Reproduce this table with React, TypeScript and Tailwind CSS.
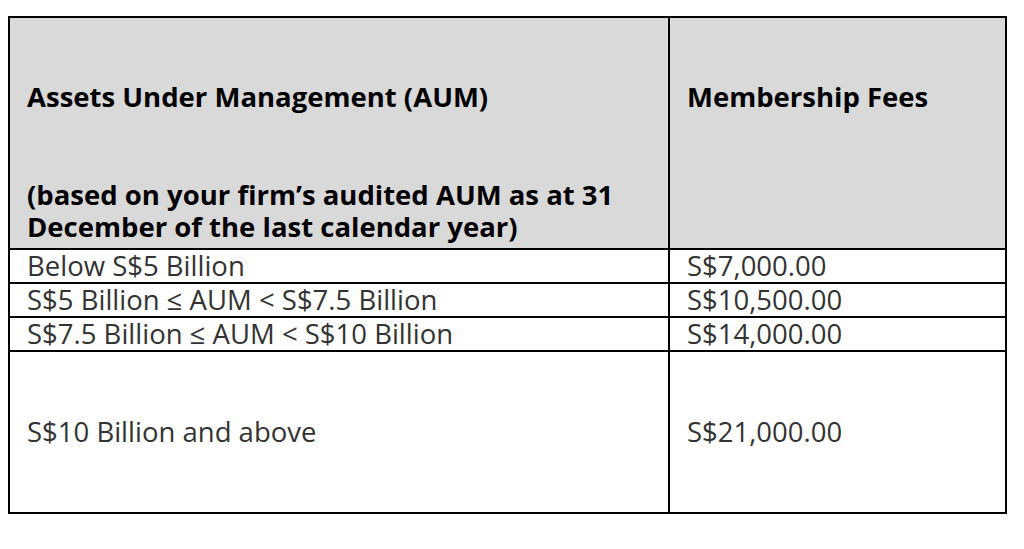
const rows = [
  { aum: 'Below S$5 Billion', fee: 'S$7,000.00' },
  { aum: 'S$5 Billion ≤ AUM < S$7.5 Billion', fee: 'S$10,500.00' },
  { aum: 'S$7.5 Billion ≤ AUM < S$10 Billion', fee: 'S$14,000.00' },
]

export default function App() {
  return (
    <div className="min-h-[549px] bg-white pl-[8px] pt-[16px]" style={{ fontFamily: '"Open Sans", "Noto Sans", sans-serif' }}>
      <table className="w-[999px] border-collapse border-2 border-black text-[27.5px] leading-[32px] text-[#333]">
        <colgroup>
          <col className="w-[660px]" />
          <col />
        </colgroup>
        <thead>
          <tr className="bg-[#d9d9d9] text-black font-bold align-top">
            <th className="h-[232px] border-2 border-black pl-[17px] pr-[17px] pt-[63px] text-left font-bold leading-[32.5px]">
              <p>Assets Under Management (AUM)</p>
              <p className="mt-[65px]">
                (based on your firm’s audited AUM as at 31
                <br />
                December of the last calendar year)
              </p>
            </th>
            <th className="border-2 border-black pl-[17px] pt-[63px] text-left font-bold leading-[32.5px]">
              Membership Fees
            </th>
          </tr>
        </thead>
        <tbody>
          {rows.map((r) => (
            <tr key={r.aum} className="h-[34px]">
              <td className="border-2 border-black pl-[17px] py-0">{r.aum}</td>
              <td className="border-2 border-black pl-[17px] py-0">{r.fee}</td>
            </tr>
          ))}
          <tr className="h-[162px] align-middle">
            <td className="border-2 border-black pl-[17px]">S$10 Billion and above</td>
            <td className="border-2 border-black pl-[17px]">S$21,000.00</td>
          </tr>
        </tbody>
      </table>
    </div>
  )
}
